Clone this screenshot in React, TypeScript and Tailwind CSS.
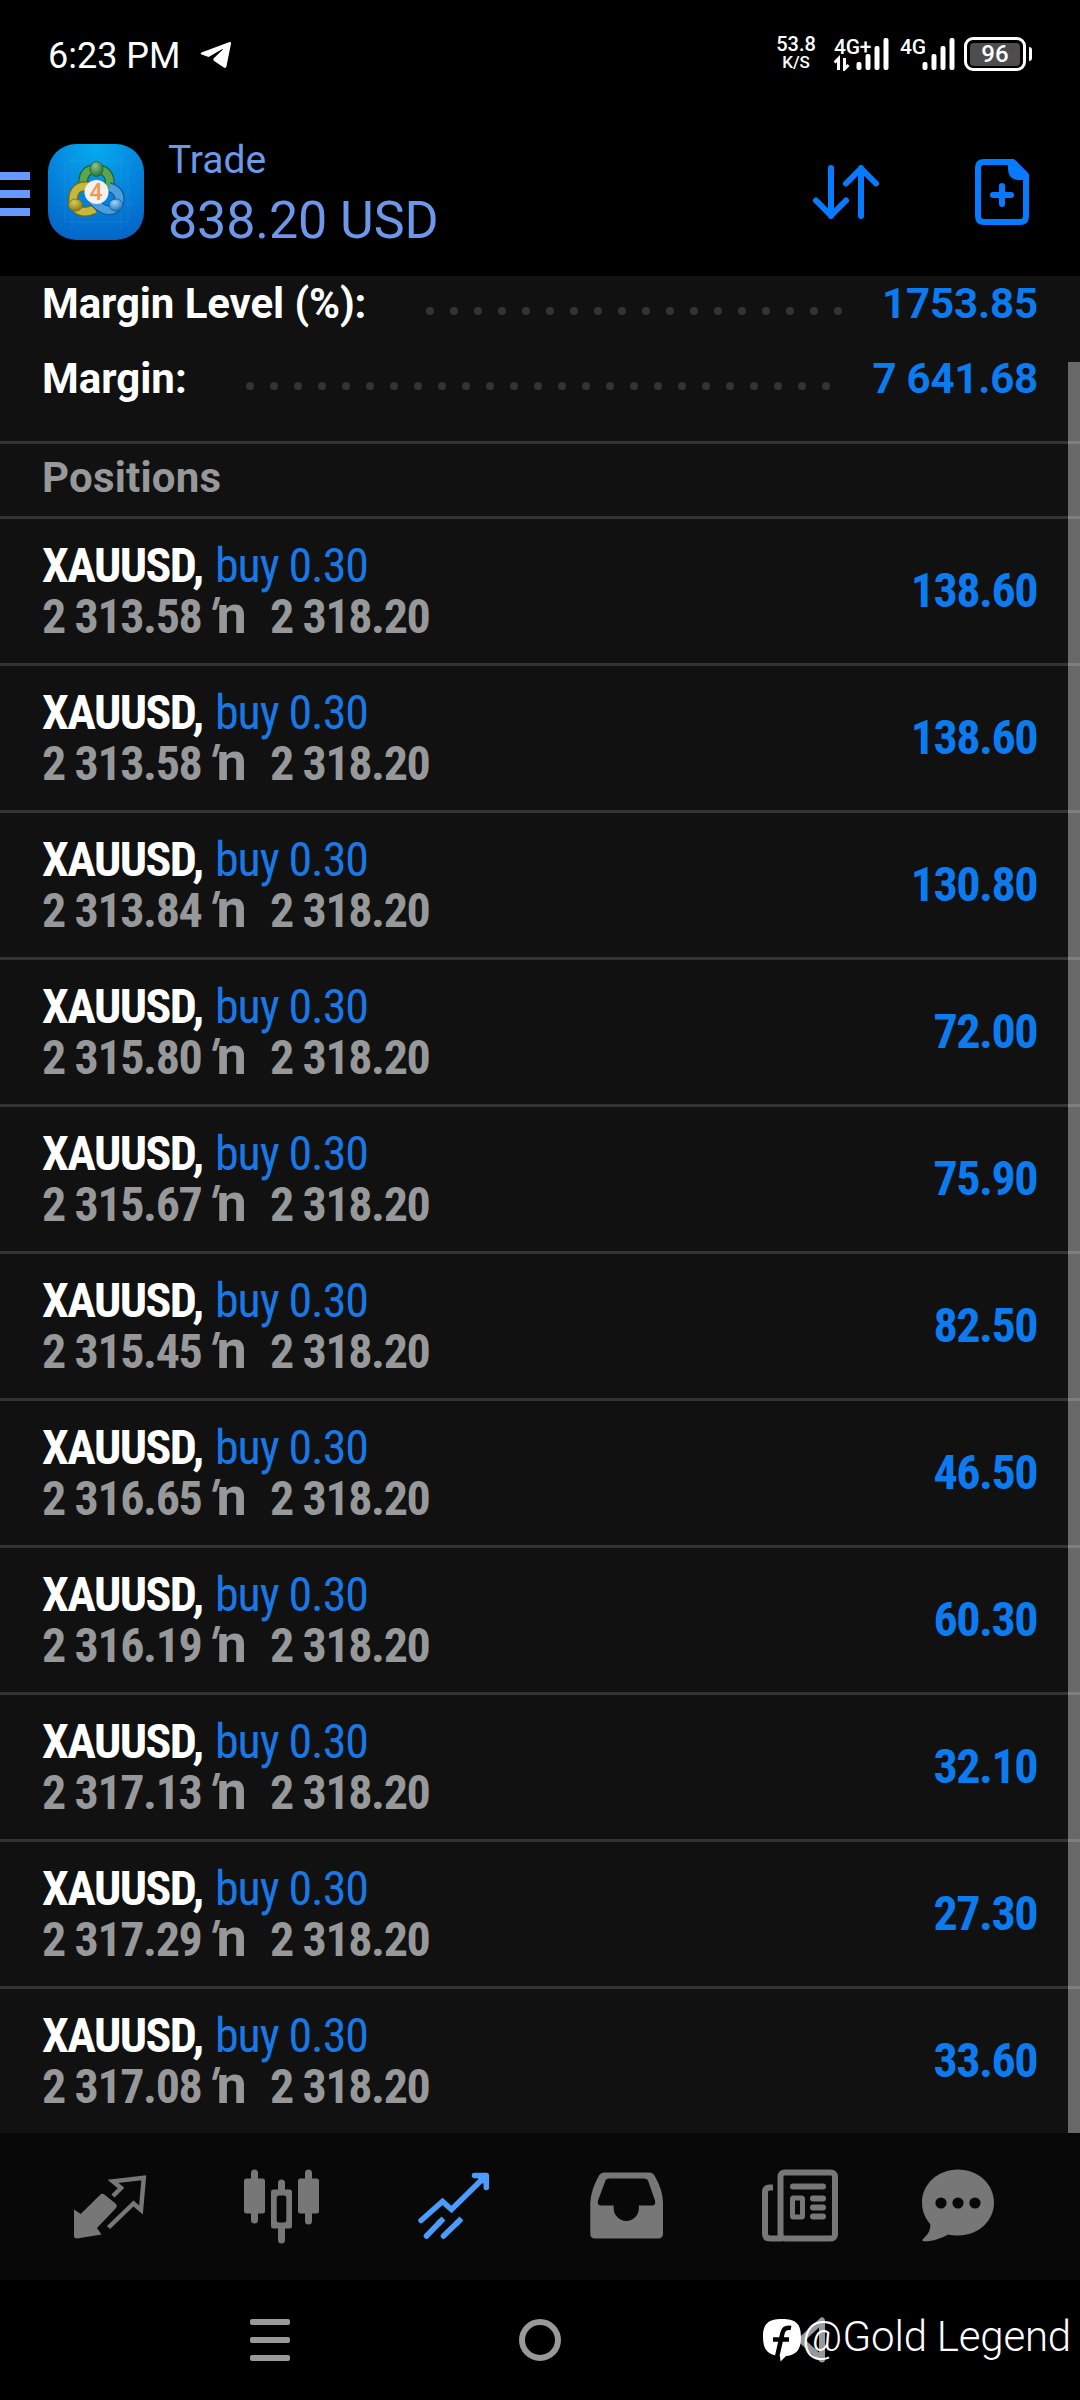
import type { ReactNode } from "react";

const positions = [
  { open: "2 313.58", profit: "138.60" },
  { open: "2 313.58", profit: "138.60" },
  { open: "2 313.84", profit: "130.80" },
  { open: "2 315.80", profit: "72.00" },
  { open: "2 315.67", profit: "75.90" },
  { open: "2 315.45", profit: "82.50" },
  { open: "2 316.65", profit: "46.50" },
  { open: "2 316.19", profit: "60.30" },
  { open: "2 317.13", profit: "32.10" },
  { open: "2 317.29", profit: "27.30" },
  { open: "2 317.08", profit: "33.60" },
];

function Signal({ label, traffic }: { label: string; traffic?: boolean }) {
  return (
    <div className="relative h-[34px] w-[55px]">
      <span className="absolute left-0 top-0 text-[21px] leading-[20px] font-medium tracking-[-0.2px]">{label}</span>
      <svg width="55" height="34" viewBox="0 0 55 34" fill="#fff">
        <rect x="22.500" y="25" width="5" height="8" rx="2" />
        <rect x="31.500" y="17" width="5" height="16" rx="2" />
        <rect x="40.500" y="9" width="5" height="24" rx="2" />
        <rect x="49.500" y="1" width="5" height="32" rx="2" />
        {traffic && (
          <path d="M0.5 25.5 L4.5 21.5 V33 M10.5 21 V32 L14.5 28" fill="none" stroke="#fff" strokeWidth="3" />
        )}
      </svg>
    </div>
  );
}

function StatusBar() {
  return (
    <div className="flex h-[108px] items-center pl-12 pr-12 text-white">
      <span className="mt-1 text-[36px] leading-[44px]">6:23 PM</span>
      <svg className="ml-[19px] mt-[2px]" width="32" height="28" viewBox="0 0 32 28" fill="#fff">
        <path d="M29.5 1 L1.5 11.6 Q-0.2 12.8 1.7 13.6 L8.6 15.9 L22 8.2 Q23.6 7.6 22.4 8.9 L13.5 17.6 Q13 19.4 14.5 20.3 L23.8 26.6 Q25.8 27.8 26.5 25.2 L31 2.6 Q31.2 0.6 29.5 1 Z" />
      </svg>
      <div className="ml-auto flex w-10 flex-col items-center pb-1">
        <span className="text-[20px] leading-[20px] font-medium">53.8</span>
        <span className="text-[17px] leading-[17px] font-medium">K/S</span>
      </div>
      <div className="ml-[18px]">
        <Signal label="4G+" traffic />
      </div>
      <div className="ml-[11px]">
        <Signal label="4G" />
      </div>
      <div className="ml-[9px] flex items-center">
        <div className="flex h-[34px] w-[62px] items-center justify-center rounded-[9px] border-[3px] border-white">
          <div className="flex h-[23px] w-[50px] items-center justify-center rounded-[4px] bg-[#4d4d4d] text-[24px] leading-[23px] font-medium">
            96
          </div>
        </div>
        <div className="ml-[3px] h-[14px] w-[3px] rounded-r-[3px] bg-white" />
      </div>
    </div>
  );
}

function AppIcon() {
  return (
    <svg width="96" height="96" viewBox="0 0 96 96" className="ml-[18px]">
      <defs>
        <radialGradient id="bg" cx="0.5" cy="0.05" r="1">
          <stop offset="0" stopColor="#06aaee" />
          <stop offset="0.5" stopColor="#0584dc" />
          <stop offset="1" stopColor="#0464c6" />
        </radialGradient>
        <radialGradient id="green" cx="0.4" cy="0.3" r="0.7">
          <stop offset="0" stopColor="#8cc488" />
          <stop offset="1" stopColor="#25743a" />
        </radialGradient>
        <radialGradient id="gold" cx="0.4" cy="0.3" r="0.7">
          <stop offset="0" stopColor="#d8cc58" />
          <stop offset="1" stopColor="#8d7c12" />
        </radialGradient>
        <radialGradient id="blue" cx="0.4" cy="0.3" r="0.7">
          <stop offset="0" stopColor="#a4d4f6" />
          <stop offset="1" stopColor="#1c72c0" />
        </radialGradient>
      </defs>
      <rect width="96" height="96" rx="28" fill="url(#bg)" />
      <path d="M17 17 H80 M17 78 H80 M17 17 V78 M80 17 V78 M24 10 V86 M73 10 V86 M10 60 H86" stroke="#4db8f5" strokeWidth="0.6" opacity="0.25" />
      <g fill="none">
        <path d="M36 45 Q32 25 48.5 25 Q65 26 61 47" stroke="#1d6135" strokeWidth="10" />
        <path d="M36 45 Q32 25 48.5 25 Q65 26 61 47" stroke="#5aa552" strokeWidth="7.500" />
        <path d="M44 43 Q25 39 25 57 Q29 73 47 65" stroke="#746b12" strokeWidth="10" />
        <path d="M44 43 Q25 39 25 57 Q29 73 47 65" stroke="#c4b93c" strokeWidth="7.500" />
        <path d="M61 43 Q74 47 71 60 Q62 74 45 57" stroke="#155b9c" strokeWidth="10" />
        <path d="M61 43 Q74 47 71 60 Q62 74 45 57" stroke="#4a9fdc" strokeWidth="7.500" />
      </g>
      <ellipse cx="48.5" cy="25" rx="6.500" ry="7.5" fill="url(#green)" stroke="#1d6135" strokeWidth="0.8" />
      <ellipse cx="27.5" cy="61" rx="7" ry="6" fill="url(#gold)" stroke="#746b12" strokeWidth="0.8" />
      <ellipse cx="68" cy="61" rx="7" ry="6" fill="url(#blue)" stroke="#155b9c" strokeWidth="0.8" />
      <circle cx="48.5" cy="48" r="12" fill="#f4f2f0" />
      <text x="48" y="56" textAnchor="middle" fontSize="23" fontWeight="500" fill="#f09a50" fontFamily="Roboto, sans-serif">
        4
      </text>
    </svg>
  );
}

function Header() {
  return (
    <header className="flex h-[168px] items-center">
      <div className="mt-1 flex w-[30px] flex-col gap-[10px]">
        <div className="h-2 bg-[#6699ff]" />
        <div className="h-2 bg-[#6699ff]" />
        <div className="h-2 bg-[#6699ff]" />
      </div>
      <AppIcon />
      <div className="ml-6 mt-1 text-[#6d98ea]">
        <div className="text-[39px] leading-[52px]">Trade</div>
        <div className="pt-px text-[52px] leading-[68px] tracking-[-0.1px]">838.20 USD</div>
      </div>
      <svg className="ml-auto" width="70" height="60" viewBox="811 162 70 60" fill="none" stroke="#067bff" strokeWidth="6" strokeLinecap="round" strokeLinejoin="round">
        <path d="M831 168 V216 M816 200.500 L831 215.500 L846 200.500" />
        <path d="M861 216 V168 M846 183.500 L861 168.500 L876 183.500" />
      </svg>
      <svg className="ml-[94px] mr-[51px]" width="54" height="66" viewBox="975 159 54 66" fill="none">
        <path d="M984 162 H1013 L1026 175 V216 Q1026 222 1020 222 H984 Q978 222 978 216 V168 Q978 162 984 162 Z" stroke="#067bff" strokeWidth="6" strokeLinejoin="round" />
        <path d="M1008 162 H1014 L1027 175 V180 H1018 Q1008 179 1008 169 Z" fill="#067bff" />
        <path d="M993 195 H1011 M1002 186 V204" stroke="#067bff" strokeWidth="6" strokeLinecap="round" />
      </svg>
    </header>
  );
}

function Dots({ count }: { count: number }) {
  return (
    <div className="mt-[15px] flex gap-4">
      {Array.from({ length: count }, (_, i) => (
        <div key={i} className="size-2 rounded-full bg-[#333333]" />
      ))}
    </div>
  );
}

function Position({ open, profit }: { open: string; profit: string }) {
  return (
    <div className="flex h-[147px] items-center border-b-[3px] border-[#333333] pl-[42px] pr-[43px]">
      <div className="text-[48px] leading-[51px] [font-stretch:75%]">
        <div className="flex">
          <span className="w-[173px] whitespace-nowrap font-bold tracking-[-1.6px] text-white">XAUUSD,</span>
          <span className="tracking-[-1.1px] text-[#1a78e6]">buy 0.30</span>
        </div>
        <div className="flex h-[51px] font-bold tracking-[-1.4px] text-[#97989a]">
          <span className="w-[170px] whitespace-nowrap">{open}</span>
          <span className="w-[58px] whitespace-nowrap text-[54px] leading-[47px] tracking-[-3px] [font-stretch:90%]">
            <i className="-ml-[6px] mr-[6px] inline-block origin-bottom-left -skew-x-6 text-[48px] leading-none">'</i>n
          </span>
          <span>2 318.20</span>
        </div>
      </div>
      <span className="ml-auto pb-[2px] text-[48px] leading-[51px] font-bold tracking-[-1.5px] text-[#0d7bf0] [font-stretch:75%]">{profit}</span>
    </div>
  );
}

function NavIcon({ viewBox, children }: { viewBox: string; children: ReactNode }) {
  return (
    <div className="flex items-center justify-center">
      <svg width="84" height="84" viewBox={viewBox} fill="none" className="overflow-visible">
        {children}
      </svg>
    </div>
  );
}

function BottomNav() {
  return (
    <nav className="grid h-[147px] grid-cols-6 bg-[#080808] px-6">
      <NavIcon viewBox="68 2164.500 84 84">
        <path d="M113 2195.500 L121 2187.500 L113 2180.800 L143.800 2177.300 L141 2209.500 L133.500 2203 L108.500 2227" stroke="#777" strokeWidth="4.500" />
        <path d="M74 2209 L80.700 2213.500 L100 2194.500 Q102 2192 105 2194.500 L115.500 2203 Q118 2205.500 115.500 2208 L97 2227.500 L101.500 2234 L77 2238 Q74 2238 74 2235 Z" fill="#777" />
      </NavIcon>
      <NavIcon viewBox="240 2164.500 84 84">
        <g fill="#777">
          <rect x="244" y="2178" width="21" height="35" rx="2.500" />
          <rect x="251" y="2169" width="7" height="54" rx="3.500" />
          <rect x="298" y="2178" width="21" height="35" rx="2.500" />
          <rect x="305" y="2169" width="7" height="55" rx="3.500" />
          <rect x="278" y="2179" width="7" height="64" rx="3.500" />
          <rect x="271" y="2189" width="21" height="39" rx="2.500" />
        </g>
        <rect x="276.700" y="2195" width="9.600" height="27" rx="2.500" fill="#080808" />
      </NavIcon>
      <NavIcon viewBox="412 2164.500 84 84">
        <g stroke="#4a9cff" strokeWidth="5.500">
          <path d="M421 2220 L442.500 2201 L451.500 2209 L484 2177" strokeLinecap="round" />
          <path d="M474.500 2175 H486.300 V2187" strokeLinecap="round" strokeLinejoin="round" />
          <path d="M426.500 2235.500 L440 2221.500 M443.500 2235.500 L458 2221.500" strokeLinecap="round" />
          <path d="M438 2223.500 L443.500 2218 M456 2223.500 L461.500 2218" />
          <path d="M478 2176 L485 2176 V2183" />
        </g>
      </NavIcon>
      <NavIcon viewBox="584 2164.500 84 84">
        <path fillRule="evenodd" fill="#777" d="M604 2172 H649 Q652.500 2172 654.500 2175 Q663 2190 663 2202 V2233 Q663 2238 658 2238 H595 Q590.300 2238 590.300 2233 V2202 Q591 2189 599 2175 Q601 2172 604 2172 Z M609 2178 Q606.500 2178 605.500 2180 L598 2200 Q597 2205 601 2205 H613.700 V2208 A12.500 12.500 0 0 0 638.800 2208 V2205 H652 Q656 2205 655 2200 L648 2180 Q647 2178 644 2178 Z" />
      </NavIcon>
      <NavIcon viewBox="756 2164.500 84 84">
        <g stroke="#777" strokeWidth="6">
          <rect x="780.500" y="2172" width="54.500" height="66" rx="4" />
          <path d="M773 2187 H769.500 Q765 2187 765 2192 V2233 Q765 2238 770 2238 H782" />
          <path d="M793 2186 H823 M813 2198 H823 M813 2207 H823 M813 2216 H823" strokeLinecap="round" />
          <rect x="792.500" y="2197.500" width="10" height="19" rx="1" strokeWidth="5" />
        </g>
      </NavIcon>
      <NavIcon viewBox="928 2164.500 84 84">
        <path d="M958 2169 C978.500 2169 994 2184 994 2202 C994 2220.500 978.500 2235 958 2235 C954.500 2235 951 2234.600 948 2234 C941 2238 933 2241 924 2240.800 Q920.800 2240.300 923.500 2238 C928.500 2233.500 930.800 2229 930.200 2223.500 C925 2217.500 922 2210.500 922 2202 C922 2184 937.500 2169 958 2169 Z" fill="#777" />
        <g fill="#080808">
          <circle cx="941" cy="2202.500" r="5.600" />
          <circle cx="958" cy="2202.500" r="5.600" />
          <circle cx="975" cy="2202.500" r="5.600" />
        </g>
      </NavIcon>
    </nav>
  );
}

function SystemNav() {
  return (
    <div className="relative grid h-[120px] grid-cols-3 items-center justify-items-center bg-black px-[135px]">
      <div className="flex w-10 flex-col gap-3">
        <div className="h-[6px] rounded-[2px] bg-[#999]" />
        <div className="h-[6px] rounded-[2px] bg-[#999]" />
        <div className="h-[6px] rounded-[2px] bg-[#999]" />
      </div>
      <div className="size-[42px] rounded-full border-[6px] border-[#999]" />
      <svg width="50" height="50" viewBox="785 2315 50 50" fill="none">
        <path d="M801 2340 L822 2320.500 V2359.500 Z" stroke="#999" strokeWidth="6" strokeLinejoin="round" />
      </svg>
      <div className="absolute top-[27px] right-[9px] flex h-[60px] items-center text-white">
        <svg className="mt-[6px]" width="38" height="44" viewBox="763 2319 38 44">
          <path d="M782 2320 C796 2320 801 2325 801 2338 C801 2350 797 2356 786 2357 L780.500 2362.500 L780 2357 C768 2356 763 2351 763 2338 C763 2325 768 2320 782 2320 Z" fill="#fff" />
          <path d="M791 2329 Q784 2327.500 782.500 2334 L777 2358 M773 2340.500 H789" fill="none" stroke="#000" strokeWidth="4.500" />
        </svg>
        <span className="ml-[3px] text-[42px] leading-[60px] tracking-[-0.2px] [font-weight:360]">
          <span className="inline-block origin-right scale-x-105">@</span>Gold Legend
        </span>
      </div>
    </div>
  );
}

export default function App() {
  return (
    <div className="flex h-[2400px] w-[1080px] flex-col overflow-hidden bg-black font-[Roboto,sans-serif]">
      <StatusBar />
      <Header />
      <main className="relative h-[1857px] overflow-hidden bg-[#111111]">
        <div className="flex h-[55px] items-center px-[42px] text-[42px] font-bold">
          <span className="w-[384px] tracking-[-0.1px] text-white">Margin Level (%):</span>
          <Dots count={18} />
          <span className="ml-auto tracking-[-0.1px] text-[#0d7bf0]">1753.85</span>
        </div>
        <div className="flex h-[95px] items-center px-[42px] pb-5 pt-5 text-[42px] font-bold">
          <span className="w-[204px] text-white">Margin:</span>
          <Dots count={25} />
          <span className="ml-auto tracking-[-0.2px] text-[#0d7bf0]">7 641.68</span>
        </div>
        <div className="mt-[15px] flex h-[78px] items-center border-y-[3px] border-[#333333] px-[42px] pb-[5px] text-[42px] font-bold tracking-[0.2px] text-[#97989a]">
          Positions
        </div>
        {positions.map((p, i) => (
          <Position key={i} open={p.open} profit={p.profit} />
        ))}
        <div className="absolute top-[86px] right-0 bottom-0 w-3 bg-white/37" />
      </main>
      <BottomNav />
      <SystemNav />
    </div>
  );
}
